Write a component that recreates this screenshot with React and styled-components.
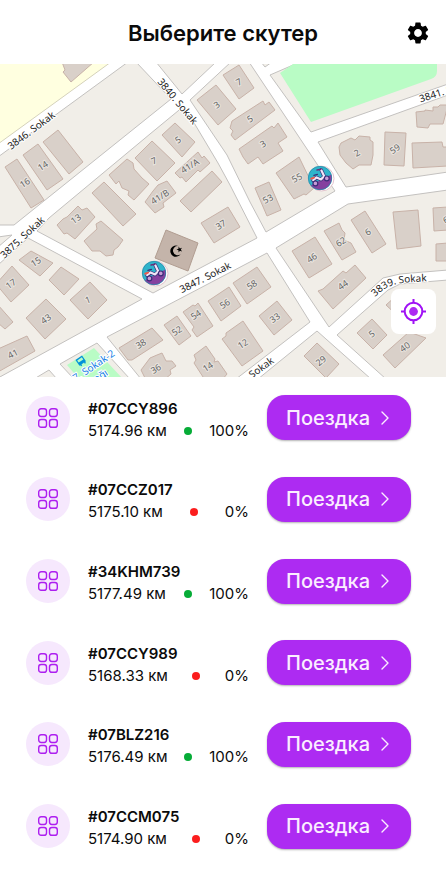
import React from "react";
import styled, { createGlobalStyle } from "styled-components";
import { MdSettings } from "react-icons/md";

const GlobalStyle = createGlobalStyle`
  * {
    box-sizing: border-box;
  }

  body {
    margin: 0;
    background: #fff;
    color: #0b0b0b;
    font-family: Inter, "Liberation Sans", sans-serif;
  }

  button {
    border: 0;
    padding: 0;
    background: none;
    color: inherit;
    font-family: inherit;
    cursor: pointer;
  }
`

// LAYOUT
const Page = styled.div`
  display: flex;
  flex-direction: column;
  min-height: 100vh;
`

const Header = styled.header`
  display: grid;
  grid-template-columns: 40px 1fr 40px;
  align-items: center;
  height: 64px;
  padding: 0 8px;
`

const Title = styled.h1`
  grid-column: 2;
  margin: 0;
  padding-top: 2px;
  font-size: 22px;
  line-height: 28px;
  font-weight: 600;
  text-align: center;
`

const SettingsButton = styled.button`
  display: flex;
  justify-content: center;
  padding-top: 2px;
  color: #000;
`

// MAP
const MapBox = styled.section`
  position: relative;
  height: 313px;
  overflow: hidden;
  background: #fff;
`

const MapSvg = styled.svg`
  display: block;
  width: 100%;
  height: 100%;
  font-family: "Noto Sans", sans-serif;
  text-anchor: middle;
`

const LocateButton = styled.button`
  position: absolute;
  right: 10px;
  bottom: 43px;
  display: flex;
  align-items: center;
  justify-content: center;
  width: 45px;
  height: 45px;
  border-radius: 8px;
  background: #fff;
`

// LIST
const List = styled.ul`
  flex: 1;
  display: grid;
  grid-auto-rows: 1fr;
  margin: 0;
  padding: 0 0 6px;
  list-style: none;
`

const Row = styled.li`
  display: flex;
  align-items: center;
  gap: 18px;
  padding: 0 35px 0 26px;
`

const IconCircle = styled.div`
  flex: none;
  display: flex;
  align-items: center;
  justify-content: center;
  width: 44px;
  height: 44px;
  border-radius: 50%;
  background: #f6e8fd;
`

const Info = styled.div`
  flex: 1;
  padding-top: 4px;
`

const Code = styled.div`
  font-size: 15px;
  line-height: 22px;
  font-weight: 600;
`

const Stats = styled.div`
  display: flex;
  align-items: center;
  justify-content: space-between;
  font-size: 15px;
  line-height: 22px;
`

const Dot = styled.span`
  width: 8px;
  height: 8px;
  border-radius: 50%;
  background: ${(props) => (props.$on ? "#06ac37" : "#fb1d1d")};
`

const RideButton = styled.button`
  flex: none;
  display: flex;
  align-items: center;
  justify-content: space-between;
  width: 144px;
  height: 45px;
  padding: 0 22px 0 19px;
  border-radius: 18px;
  background: #ad2bf2;
  box-shadow: 0 1px 2px rgba(0, 0, 0, 0.3);
  color: #fbeeff;
  font-size: 20px;
  font-weight: 500;
`

const scooters = [
  { code: "#07CCY896", km: "5174.96", charge: 100 },
  { code: "#07CCZ017", km: "5175.10", charge: 0 },
  { code: "#34KHM739", km: "5177.49", charge: 100 },
  { code: "#07CCY989", km: "5168.33", charge: 0 },
  { code: "#07BLZ216", km: "5176.49", charge: 100 },
  { code: "#07CCM075", km: "5174.90", charge: 0 },
]

// City blocks, the white left between them is the streets
const blocks = [
  "-2,157 128,62 136,62 171,99 14,225 -2,225",
  "-2,237 12,235 -2,247",
  "-2,265 28,238 142,299 -2,378",
  "37,231 49,218 150,134 184,106 218,163 230,185 257,238 153,293",
  "156,62 182,94 216,62",
  "231,62 190,100 227,155 250,202 266,232 335,191 249,62",
  "261,62 265,67 272,62",
  "270,75 300,62 448,62 448,84 311,132",
  "318,142 448,95 448,172 346,187",
  "276,248 348,204 448,190 448,270 400,274 383,278 329,327",
  "337,335 388,290 400,284 448,280 448,379 386,379",
  "317,331 371,379 258,379",
  "107,337 267,253 310,322 236,379 141,379",
  "60,364 97,343 130,379 74,379",
  "34,379 49,370 57,379",
]

const buildings = [
  "62,62 65,70 63,72 71,82 94,62",
  "5,167 17,159 44,200 31,208",
  "23,155 38,144 63,179 47,190",
  "43,142 58,130 83,162 69,174",
  "92,193 104,182 136,214 123,226",
  "109,175 127,159 133,163 134,169 142,178 149,184 134,200 128,195 129,191 122,188 119,181 116,184",
  "135,158 152,141 175,163 157,181",
  "145,202 153,191 158,185 167,181 176,193 163,203 164,207 155,213",
  "162,135 175,123 195,142 182,157",
  "175,173 187,162 198,152 202,158 204,156 210,163 200,172 198,170 186,182 182,177 180,178",
  "180,201 212,171 222,182 191,212",
  "201,223 214,243 240,227 228,207",
  "223,75 239,65 254,88 239,99",
  "197,100 216,85 236,109 218,125",
  "230,128 232,121 263,101 265,105 269,102 275,110 235,140 231,135 233,131",
  "239,149 272,126 274,128 278,123 287,137 278,143 283,151 263,164 258,157 248,164 243,157",
  "255,188 269,182 281,210 267,216",
  "276,173 299,157 314,188 306,195 304,194 294,199",
  "339,147 341,143 351,138 355,140 359,136 370,137 370,140 373,142 373,155 371,165 359,165 353,169 346,163 340,155",
  "385,132 406,133 404,166 384,165",
  "416,112 425,111 425,110 433,111 433,107 438,107 440,105 448,105 443,124 430,124 428,128 417,127",
  "412,143 442,142 443,147 448,147 448,166 413,168",
  "292,251 315,237 332,264 309,278",
  "324,231 339,223 342,230 345,233 344,240 351,243 356,252 342,260",
  "351,220 365,211 386,244 372,253",
  "393,212 418,210 421,246 397,249",
  "433,208 448,207 448,230 434,231",
  "436,244 448,243 448,261 436,261",
  "318,291 323,289 343,271 346,273 355,265 366,278 333,309",
  "357,333 372,319 387,335 373,349",
  "386,305 396,296 410,310 400,318",
  "383,355 409,332 426,338 395,368",
  "304,356 317,343 339,364 326,378",
  "233,283 257,267 271,287 247,304",
  "208,301 229,287 241,306 221,321",
  "183,312 193,305 195,306 198,303 213,326 197,337 192,330 194,327",
  "164,325 177,316 191,336 179,345",
  "119,348 152,328 163,340 132,360 128,360",
  "222,339 226,336 226,333 243,321 263,351 242,366",
  "259,316 277,301 292,320 274,335",
  "194,355 206,346 215,359 214,362 218,361 227,374 222,380 205,380 194,363 196,360",
  "141,370 150,358 157,355 162,353 166,361 172,361 176,366 170,370 171,374 164,380 146,380",
  "57,225 63,219 67,217 78,206 82,210 87,208 95,217 75,239 67,233 64,234",
  "84,241 97,229 96,224 101,221 123,240 118,247 114,250 113,255 106,256 100,251 92,251",
  "19,260 31,251 53,263 40,276",
  "-4,284 12,266 29,285 11,302",
  "49,280 61,267 79,279 64,295",
  "70,300 90,282 107,300 88,319",
  "26,318 46,299 66,319 45,339",
  "-2,305 13,322 5,329 -2,323",
  "-2,349 27,336 35,351 -2,372",
]

// [text, x, y, angle]
const houseNumbers = [
  ["16", 25, 183, -32], ["14", 43, 166, -32], ["13", 76, 219, -35],
  ["7", 154, 161, -25], ["5", 178, 140, -32], ["41/A", 190, 166, -32],
  ["41/B", 160, 197, -32], ["37", 221, 225, -32], ["7", 239, 82, -30],
  ["3", 217, 105, -35], ["5", 250, 119, -32], ["3", 263, 144, -32],
  ["53", 268, 199, -28], ["55", 297, 178, -28], ["2", 357, 153, -30],
  ["59", 395, 149, -35], ["46", 312, 258, -32], ["62", 341, 242, -32],
  ["6", 368, 232, -30], ["6", 446, 220, -30], ["44", 343, 285, -35],
  ["5", 372, 334, -35], ["40", 405, 347, -35], ["29", 321, 361, -40],
  ["58", 252, 285, -32], ["56", 225, 304, -32], ["54", 196, 315, -32],
  ["52", 177, 331, -32], ["38", 141, 344, -32], ["12", 243, 344, -32],
  ["33", 275, 318, -35], ["14", 208, 367, -32], ["36", 156, 369, -32],
  ["15", 36, 262, -32], ["17", 11, 284, -35], ["1", 88, 300, -20],
  ["43", 46, 319, -35], ["41", 13, 354, -28],
]

const streets = [
  ["3846. Sokak", 31, 130, -37],
  ["3840. Sokak", 178, 101, 50],
  ["3875. Sokak", 22, 237, -43],
  ["3847. Sokak", 205, 277, -27],
  ["3841. Sokak", 446, 90, -18],
  ["Sokak", 261, 367, -36],
]

const pins = [
  { x: 154, y: 273 },
  { x: 320, y: 178 },
]

const Pin = ({ x, y }) => {
  return (
    <g transform={`translate(${x} ${y})`}>
      <circle cx="1.6" cy="0.6" r="12.4" fill="#fff" stroke="#e3c3cd" strokeWidth="1" />
      <circle r="12" fill="#2fb4cb" />
      <path d="M11.4 -3.6 A12 12 0 0 1 -9.4 7.4 Z" fill="#85409f" />
      <circle r="11.7" fill="none" stroke="#2c7f9f" strokeWidth="0.6" />
      <g fill="none" strokeLinecap="round" strokeLinejoin="round">
        <path d="M-6.8 2.6 L-3.4 -0.4 L1 1.6 L4.2 -1.6 L1.2 -8" stroke="#3b2d78" strokeWidth="3.6" />
        <path d="M-6.8 2.2 L-3.4 -0.6 L1 1.4 L4.2 -1.8 L1.2 -8" stroke="#f0e6f7" strokeWidth="2.2" />
        <path d="M-3 -8 L1 -8.8" stroke="#6b2f78" strokeWidth="1.4" />
        <path d="M-6 -2.6 L-2.6 -3.6" stroke="#3b2d78" strokeWidth="1.4" />
        <path d="M-8.8 0.6 L-6 -0.4" stroke="#f0584a" strokeWidth="2" />
        <circle cx="-4.6" cy="5.4" r="2.4" fill="#c79bd6" stroke="#3b2d78" strokeWidth="1.2" />
        <circle cx="6.8" cy="0.4" r="2.4" fill="#c79bd6" stroke="#3b2d78" strokeWidth="1.2" />
      </g>
    </g>
  )
}

const StreetMap = () => {
  return (
    <MapSvg viewBox="0 64 446 313" preserveAspectRatio="xMidYMid slice" role="img" aria-label="Карта">
      <polygon points="-2,62 111,62 -2,144" fill="#ffffe0" stroke="#d5d2ba" />
      <g fill="#f1eee8" stroke="#c3c1bf">
        {blocks.map((points) => <polygon key={points} points={points} />)}
      </g>
      <path d="M280 73 L296 62 L437 62 L437 71 Q437 77 431 79 L311 122 Z" fill="#b9fcc5" />
      <path d="M67 365 L94 348 L123 379 L79 379 Z" fill="#b9fcc5" />

      <g fill="#d9d0c9" stroke="#c8b2a8">
        {buildings.map((points) => <polygon key={points} points={points} />)}
      </g>

      {/* mosque */}
      <polygon points="166,230 198,243 188,271 155,258" fill="#c4b4aa" stroke="#b19d91" />
      <path d="M178.6 246.2 A5.6 5.6 0 1 0 180.6 254.2 A4.6 4.6 0 1 1 178.6 246.2 Z" fill="#000" />
      <path d="M178.6 246.6 L179.9 248.4 L182 247.8 L180.8 249.6 L182 251.4 L179.9 250.8 L178.6 252.5 L178.5 250.3 L176.5 249.6 L178.5 248.8 Z" fill="#000" />

      <g fontSize="9" fill="#666" stroke="#e9e4df" strokeWidth="2" paintOrder="stroke">
        {houseNumbers.map(([text, x, y, angle]) => (
          <text key={`${x}-${y}`} transform={`translate(${x} ${y}) rotate(${angle})`} dy="3">{text}</text>
        ))}
      </g>
      <g fontSize="10" fill="#222" stroke="#fff" strokeWidth="2" paintOrder="stroke">
        {streets.map(([text, x, y, angle]) => (
          <text key={`${x}-${y}`} transform={`translate(${x} ${y}) rotate(${angle})`} dy="4">{text}</text>
        ))}
        <path id="street3839" d="M375 297 Q386 286 397 284 Q406 282 436 281" fill="none" stroke="none" />
        <text textAnchor="start"><textPath href="#street3839">3839. Sokak</textPath></text>
      </g>

      {/* bus stop */}
      <g transform="translate(81 361) rotate(-35)">
        <path d="M-4 -4 H4 V3 H3 V4.4 H1.6 V3 H-1.6 V4.4 H-3 V3 H-4 Z" fill="#0092da" />
        <path d="M-2.8 -2.6 H2.8 V0 H-2.8 Z" fill="#b9fcc5" />
      </g>
      <g fontSize="10" fill="#1580e6" stroke="#fff" strokeWidth="2" paintOrder="stroke">
        <text transform="translate(94 366) rotate(-34)" dy="3">7. Sokak-2</text>
        <text transform="translate(101 376) rotate(-34)" dy="3">ağı</text>
      </g>

      {pins.map((pin) => <Pin key={pin.x} {...pin} />)}
    </MapSvg>
  )
}

const LocateIcon = () => (
  <svg width="25" height="25" viewBox="0 0 25 25" fill="none" stroke="#a012f5" strokeWidth="2" aria-hidden="true">
    <circle cx="12.5" cy="12.5" r="8.8" />
    <circle cx="12.5" cy="12.5" r="4.4" fill="#ad2bf2" stroke="none" />
    <path d="M12.5 0 V4 M12.5 21 V25 M0 12.5 H4 M21 12.5 H25" />
  </svg>
)

const GridIcon = () => (
  <svg width="20" height="20" viewBox="0 0 20 20" fill="none" stroke="#ad1ff0" strokeWidth="1.4" aria-hidden="true">
    <rect x="0.7" y="0.7" width="7.8" height="7.8" rx="2.4" />
    <rect x="11.5" y="0.7" width="7.8" height="7.8" rx="2.4" />
    <rect x="0.7" y="11.5" width="7.8" height="7.8" rx="2.4" />
    <rect x="11.5" y="11.5" width="7.8" height="7.8" rx="2.4" />
  </svg>
)

const ScooterRow = ({ code, km, charge }) => {
  return (
    <Row>
      <IconCircle><GridIcon /></IconCircle>
      <Info>
        <Code>{code}</Code>
        <Stats>
          <span>{km} км</span>
          <Dot $on={charge > 0} />
          <span>{charge}%</span>
        </Stats>
      </Info>
      <RideButton type="button">
        Поездка
        <svg width="8" height="14" viewBox="0 0 8 14" fill="none" stroke="currentColor" strokeWidth="1.4" strokeLinecap="round" strokeLinejoin="round" aria-hidden="true">
          <path d="M1 1 L7 7 L1 13" />
        </svg>
      </RideButton>
    </Row>
  )
}

const App = () => {
  return (
    <Page>
      <GlobalStyle />
      <Header>
        <Title>Выберите скутер</Title>
        <SettingsButton type="button" aria-label="Настройки"><MdSettings size={26} /></SettingsButton>
      </Header>
      <MapBox>
        <StreetMap />
        <LocateButton type="button" aria-label="Моё местоположение"><LocateIcon /></LocateButton>
      </MapBox>
      <List>
        {scooters.map((scooter) => <ScooterRow key={scooter.code} {...scooter} />)}
      </List>
    </Page>
  )
}

export default App;
